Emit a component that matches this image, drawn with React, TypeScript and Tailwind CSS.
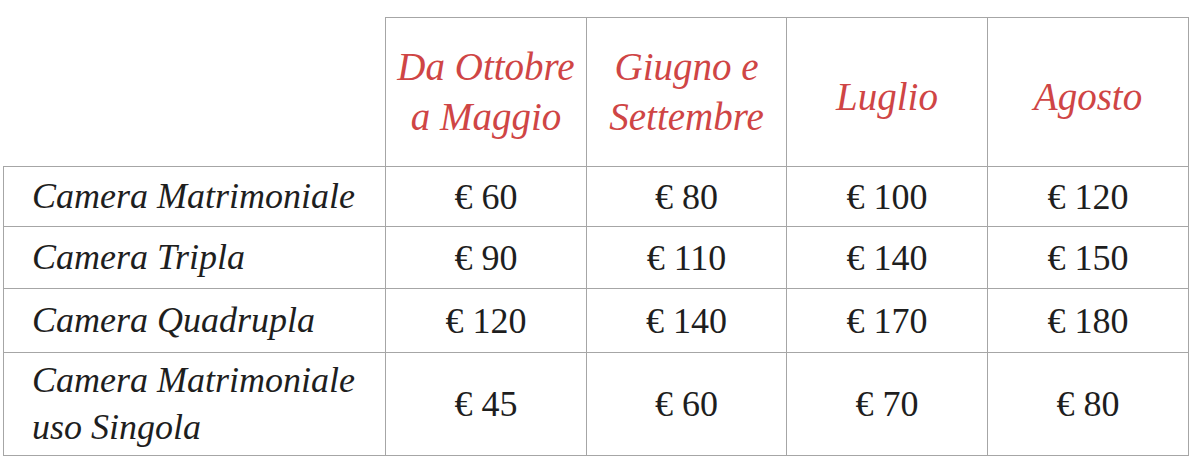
import React from 'react';

const periods = [
  ['Da Ottobre', 'a Maggio'],
  ['Giugno e', 'Settembre'],
  ['Luglio'],
  ['Agosto'],
];

const rooms = [
  { name: ['Camera Matrimoniale'], prices: ['€ 60', '€ 80', '€ 100', '€ 120'], h: 'h-[60px]' },
  { name: ['Camera Tripla'], prices: ['€ 90', '€ 110', '€ 140', '€ 150'], h: 'h-[62px]' },
  { name: ['Camera Quadrupla'], prices: ['€ 120', '€ 140', '€ 170', '€ 180'], h: 'h-[64px]' },
  { name: ['Camera Matrimoniale', 'uso Singola'], prices: ['€ 45', '€ 60', '€ 70', '€ 80'], h: 'h-[103px]' },
];

export default function App() {
  return (
    <div className="w-[1190px] h-[467px] bg-white pt-[17px] pl-[3px] font-['Liberation_Serif',serif]">
      <table className="border-collapse table-fixed">
        <colgroup>
          <col className="w-[382px]" />
          <col className="w-[201px]" />
          <col className="w-[200px]" />
          <col className="w-[201px]" />
          <col className="w-[201px]" />
        </colgroup>
        <thead>
          <tr className="h-[149px]">
            <th className="p-0" />
            {periods.map((p, i) => (
              <th
                key={i}
                className={`border border-[#a6a6a6] p-0 text-center align-middle font-normal italic text-[39px] leading-[50px] text-[#cf4545] ${p.length === 1 ? 'pt-[10px]' : ''}`}
              >
                {p.map((l, j) => (
                  <div key={j} className="whitespace-nowrap">{l}</div>
                ))}
              </th>
            ))}
          </tr>
        </thead>
        <tbody>
          {rooms.map((r, i) => (
            <tr key={i} className={r.h}>
              <td className="border border-[#a6a6a6] pl-[28px] align-middle italic text-[36px] leading-[47px] text-[#1e1e1e]">
                {r.name.map((l, j) => (
                  <div key={j} className="whitespace-nowrap">{l}</div>
                ))}
              </td>
              {r.prices.map((p, j) => (
                <td
                  key={j}
                  className="border border-[#a6a6a6] text-center align-middle text-[36px] text-[#1e1e1e]"
                >
                  {p}
                </td>
              ))}
            </tr>
          ))}
        </tbody>
      </table>
    </div>
  );
}
